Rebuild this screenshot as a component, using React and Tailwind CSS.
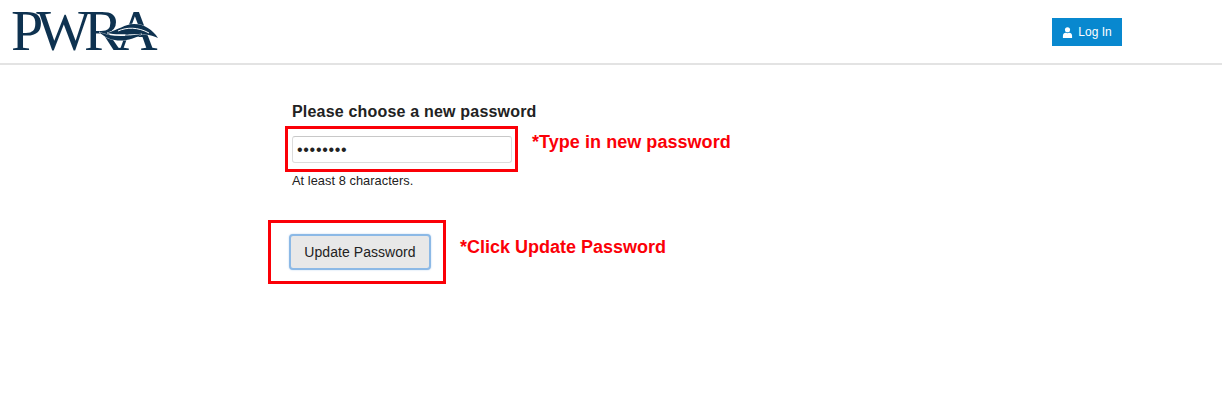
export default function App() {
  return (
    <div className="min-h-[411px] bg-white" style={{ fontFamily: '"Liberation Sans", Arial, sans-serif' }}>
      <header className="h-[65px] flex items-start justify-between border-b-2 border-[#e3e3e3] pl-3 pr-[100px]">
        <div className="relative w-[148px] h-[44px] mt-[9px]">
          <span
            className="block -ml-[1px] text-[58px] leading-[44px] tracking-[-7px] text-[#0e3250] whitespace-nowrap"
            style={{ fontFamily: '"Liberation Serif", serif' }}
          >
            PWRA
          </span>
          <svg className="absolute left-[86px] top-[13px]" width="62" height="24" viewBox="0 0 62 24">
            <path d="M9 11C20 8 27 2 36 2C46 2 55 8 60 16C52 12 44 12 34 12C26 12 17 13 9 11Z" fill="#0e3250" stroke="#fff" strokeWidth="0.7" paintOrder="stroke" />
            <path d="M20 9C29 5 40 5 51 11" stroke="#ffffff" strokeWidth="1" fill="none" />
            <path d="M1 10C12 15 26 15 44 12C32 20 13 22 1 10Z" fill="#0e3250" stroke="#fff" strokeWidth="0.7" paintOrder="stroke" />
          </svg>
        </div>
        <button className="mt-[18px] w-[70px] h-[28px] bg-[#0888cf] text-white text-[12px] flex items-center justify-center gap-[5px]">
          <svg width="11" height="11" viewBox="0 0 12 12" fill="#fff">
            <circle cx="6" cy="3" r="2.8" />
            <path d="M1 12V9.5C1 7.5 2.5 6.5 4 6.3C5 7 7 7 8 6.3C9.5 6.5 11 7.5 11 9.5V12Z" />
          </svg>
          Log In
        </button>
      </header>

      <main className="pl-[268px] pt-[37px]">
        <h2 className="ml-6 text-[16px] leading-5 font-bold tracking-[0.19px] text-[#222]">Please choose a new password</h2>

        <div className="ml-[17px] mt-1 flex items-start gap-[14px]">
          <div className="w-[233px] h-[46px] border-[3px] border-[#fb0007] pl-1 pt-[7px]">
            <div className="w-[220px] h-[27px] border border-[#dcdcdc] border-t-[#c8c8c8] rounded-[3px] bg-white flex items-center pl-[4px] text-[16px] tracking-[0.7px] text-[#222]">
              ••••••••
            </div>
          </div>
          <span className="mt-[5px] text-[18px] leading-[22px] font-bold tracking-[0.05px] text-[#fb0007] whitespace-nowrap">*Type in new password</span>
        </div>

        <p className="ml-6 mt-[1px] text-[12.8px] leading-4 tracking-[0.05px] text-[#222]">At least 8 characters.</p>

        <div className="mt-[31px] flex items-start gap-[14px]">
          <div className="w-[178px] h-[64px] border-[3px] border-[#fb0007] pl-[18px] flex items-center">
            <button className="w-[142px] h-[36px] bg-[#e8e8e8] border-2 border-[#8cb9e6] rounded-[4px] shadow-[0_0_2px_#b9d4f0] text-[14px] tracking-[0.05px] text-[#222]">
              Update Password
            </button>
          </div>
          <span className="mt-4 text-[18px] leading-[22px] font-bold text-[#fb0007] whitespace-nowrap">*Click Update Password</span>
        </div>
      </main>
    </div>
  );
}
